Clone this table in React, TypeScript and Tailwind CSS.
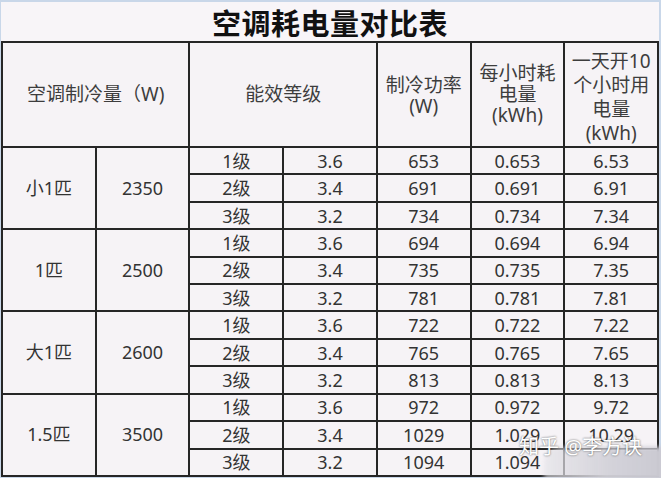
import React from "react";

const groups = [
  {
    name: "小1匹",
    cap: "2350",
    rows: [
      ["1级", "3.6", "653", "0.653", "6.53"],
      ["2级", "3.4", "691", "0.691", "6.91"],
      ["3级", "3.2", "734", "0.734", "7.34"],
    ],
  },
  {
    name: "1匹",
    cap: "2500",
    rows: [
      ["1级", "3.6", "694", "0.694", "6.94"],
      ["2级", "3.4", "735", "0.735", "7.35"],
      ["3级", "3.2", "781", "0.781", "7.81"],
    ],
  },
  {
    name: "大1匹",
    cap: "2600",
    rows: [
      ["1级", "3.6", "722", "0.722", "7.22"],
      ["2级", "3.4", "765", "0.765", "7.65"],
      ["3级", "3.2", "813", "0.813", "8.13"],
    ],
  },
  {
    name: "1.5匹",
    cap: "3500",
    rows: [
      ["1级", "3.6", "972", "0.972", "9.72"],
      ["2级", "3.4", "1029", "1.029", "10.29"],
      ["3级", "3.2", "1094", "1.094", ""],
    ],
  },
];

const cell = "bg-[#f6f3f6] flex items-center justify-center text-center";

export default function App() {
  return (
    <div
      className="relative w-[661px] h-[478px] bg-[#c9d7e9] pt-[2px] pl-[1px] pr-[2px] pb-[1px] flex flex-col text-[#333] overflow-hidden"
      style={{ fontFamily: '"Noto Sans", "Noto Sans CJK SC", sans-serif' }}
    >
      {/* TITLE */}
      <div className="h-[39px] shrink-0 bg-[#f8f5f8] flex items-center justify-center pt-[4px]">
        <span className="text-[29px] font-bold leading-none text-[#111] tracking-[0.5px]">
          空调耗电量对比表
        </span>
      </div>

      {/* TABLE */}
      <div className="flex-1 grid grid-cols-7 grid-rows-[103px_repeat(12,minmax(0,1fr))] gap-[2px] p-[2px] bg-[#262626]">
        <div className={`${cell} col-span-2 text-[19px] text-[#3d3d3d]`}>空调制冷量（W)</div>
        <div className={`${cell} col-span-2 text-[19px] text-[#3d3d3d]`}>能效等级</div>
        <div className={`${cell} flex-col text-[19px] leading-[21px] text-[#3d3d3d] pt-[2px]`}>
          <span>制冷功率</span>
          <span>(W)</span>
        </div>
        <div className={`${cell} flex-col text-[19px] leading-[21px] text-[#3d3d3d]`}>
          <span>每小时耗</span>
          <span>电量</span>
          <span>(kWh)</span>
        </div>
        <div className={`${cell} flex-col text-[19px] leading-[24px] text-[#3d3d3d] pt-[4px]`}>
          <span>一天开10</span>
          <span>个小时用</span>
          <span>电量</span>
          <span>(kWh)</span>
        </div>

        {groups.map((g) => (
          <React.Fragment key={g.name}>
            <div className={`${cell} row-span-3 text-[18px]`}>{g.name}</div>
            <div className={`${cell} row-span-3 text-[18px]`}>{g.cap}</div>
            {g.rows.map((r, i) => (
              <React.Fragment key={i}>
                {r.map((v, j) => (
                  <div key={j} className={`${cell} text-[18px] leading-none`}>
                    {v}
                  </div>
                ))}
              </React.Fragment>
            ))}
          </React.Fragment>
        ))}
      </div>

      {/* WATERMARK */}
      <div className="absolute left-[544px] top-[447px] w-[124px] h-[34px] bg-gradient-to-r from-[#e2e1e6]/60 via-[#d3d2d9]/95 to-[#c9c8d1] blur-[2px] rounded-tl-[16px]" />
      <div className="absolute left-[519px] top-[437px] text-[20px] leading-none text-white [text-shadow:0_0_2px_rgba(60,60,60,0.9)] whitespace-nowrap">
        知乎 @李方诀
      </div>
    </div>
  );
}
